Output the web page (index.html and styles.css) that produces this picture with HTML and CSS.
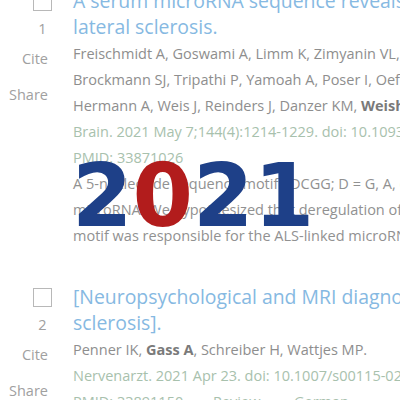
FILE: index.html
```html
<!DOCTYPE html>
<html lang="en">
<head>
<meta charset="utf-8">
<title>PubMed 2021</title>
<link rel="stylesheet" href="styles.css">
</head>
<body>
<div class="results">
  <article class="doc">
    <div class="side">
      <span class="box"></span>
      <span class="num">1</span>
      <span class="act">Cite</span>
      <span class="act share">Share</span>
    </div>
    <div class="main">
      <div class="title">
        <span class="line">A serum microRNA sequence reveals fragile X protein pathology in amyotrophic</span>
        <span class="line">lateral sclerosis.</span>
      </div>
      <div class="authors">
        <span class="line">Freischmidt A, Goswami A, Limm K, Zimyanin VL, Demestre M, Glaß H, Holzmann K,</span>
        <span class="line">Brockmann SJ, Tripathi P, Yamoah A, Poser I, Oefner PJ, Böckers T, Aronica E,</span>
        <span class="line">Hermann A, Weis J, Reinders J, Danzer KM, <b>Weishaupt JH</b>.</span>
      </div>
      <div class="journal">
        <span class="line">Brain. 2021 May 7;144(4):1214-1229. doi: 10.1093/brain/awab018.</span>
        <span class="line">PMID: 33871026</span>
      </div>
      <div class="snippet">
        <span class="line">A 5-nucleotide sequence motif SDCGG; D = G, A, or U) ... of a specific</span>
        <span class="line">microRNA. We hypothesized that deregulation of microRNAs with this</span>
        <span class="line">motif was responsible for the ALS-linked microRNA signature ...</span>
      </div>
    </div>
  </article>
  <article class="doc">
    <div class="side">
      <span class="box"></span>
      <span class="num">2</span>
      <span class="act">Cite</span>
      <span class="act share">Share</span>
    </div>
    <div class="main">
      <div class="title">
        <span class="line">[Neuropsychological and MRI diagnostics in multiple</span>
        <span class="line">sclerosis].</span>
      </div>
      <div class="authors">
        <span class="line">Penner IK, <b>Gass A</b>, Schreiber H, Wattjes MP.</span>
      </div>
      <div class="journal">
        <span class="line">Nervenarzt. 2021 Apr 23. doi: 10.1007/s00115-021-01113-5. Online ahead of print.</span>
        <span class="line">PMID: 33891150 <span class="tag">Review.</span> <span class="tag">German.</span></span>
      </div>
    </div>
  </article>
</div>
<div class="year"><span class="blue">2</span><span class="red">0</span><span class="blue">21</span></div>
</body>
</html>
```
FILE: styles.css
```css
html, body {
  margin: 0;
  padding: 0;
}
body {
  width: 400px;
  height: 400px;
  overflow: hidden;
  position: relative;
  background: #ffffff;
  font-family: "Open Sans", "Noto Sans", sans-serif;
}
.results {
  margin-top: -12px;
}
.doc {
  display: flex;
}
.doc + .doc {
  margin-top: 35px;
}
.side {
  width: 73px;
  flex: none;
  box-sizing: border-box;
  padding-right: 21px;
  display: flex;
  flex-direction: column;
  align-items: flex-end;
  color: #a0a0a0;
  font-size: 14.5px;
}
.box {
  display: block;
  width: 17px;
  height: 17px;
  border: 1px solid #b8b8b8;
  margin-top: 4px;
  margin-bottom: 5px;
}
.num {
  width: 19px;
  text-align: center;
  line-height: 26px;
}
.act {
  line-height: 34px;
  margin-right: 4px;
}
.act.share {
  margin-top: 2px;
}
.main {
  flex: 1;
  min-width: 0;
  white-space: nowrap;
  font-size: 14.5px;
  line-height: 26px;
}
.line {
  display: block;
}
.title {
  font-size: 19.4px;
  line-height: 26px;
  color: #86b9e2;
  margin-bottom: 1px;
}
.authors {
  color: #8e8e8e;
}
.authors b {
  color: #7a7a7a;
  font-weight: 700;
}
.journal {
  color: #a8c1ad;
}
.tag {
  margin-left: 26px;
}
.snippet {
  color: #919191;
}
.year {
  position: absolute;
  left: 72px;
  top: 153px;
  font-family: "DejaVu Sans", sans-serif;
  font-weight: 700;
  font-size: 87px;
  line-height: 1;
  white-space: nowrap;
}
.blue {
  color: #1e4088;
}
.red {
  color: #b21c1c;
}
```
